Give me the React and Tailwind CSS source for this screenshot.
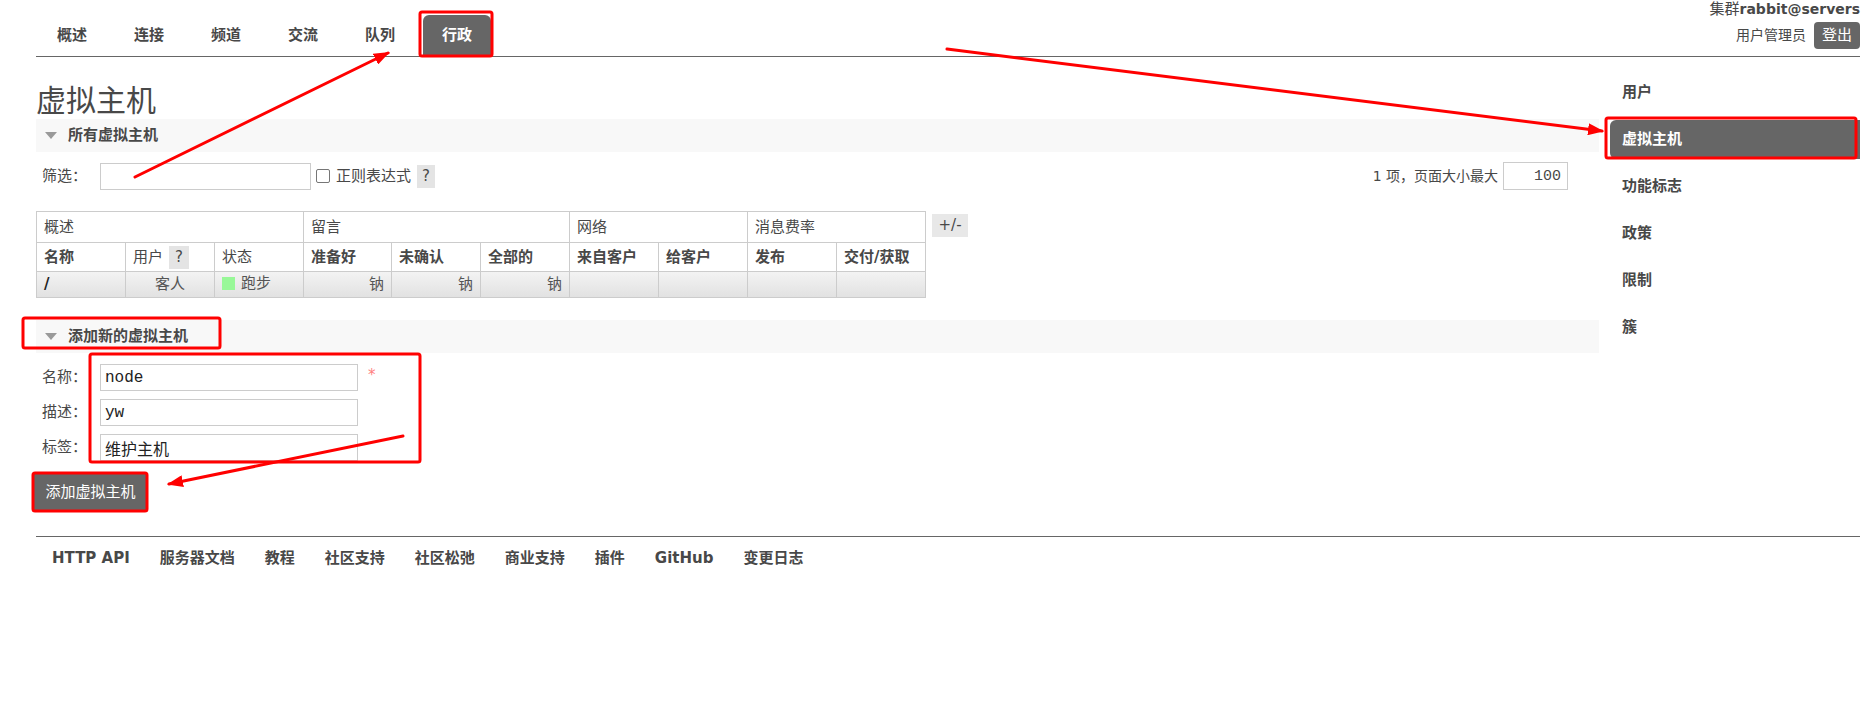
import React from "react";

const F = "font-['DejaVu_Sans','Noto_Sans_CJK_SC',sans-serif]";

function Tri() {
  return (
    <svg width="12" height="7" viewBox="0 0 12 7" className="shrink-0">
      <polygon points="0,0 12,0 6,7" fill="#9a9a9a" />
    </svg>
  );
}

function SectionHeader({ title }) {
  return (
    <div className="h-[33px] bg-[#f8f8f8] flex items-center pl-[9px] gap-[11px]">
      <Tri />
      <span className="font-bold text-[15px] text-[#484848]">{title}</span>
    </div>
  );
}

const tabs = ["概述", "连接", "频道", "交流", "队列", "行政"];
const side = ["用户", "虚拟主机", "功能标志", "政策", "限制", "簇"];
const footer = ["HTTP API", "服务器文档", "教程", "社区支持", "社区松弛", "商业支持", "插件", "GitHub", "变更日志"];

export default function App() {
  const cell = "border border-[#cccccc] px-[7px] overflow-hidden whitespace-nowrap";
  return (
    <div className={`relative w-full min-h-[724px] bg-white text-[#484848] text-[15px] pl-[36px] pr-[13px] ${F}`}>
      {/* header */}
      <div className="flex justify-between h-[57px] border-b border-[#666666]">
        <div className="flex items-end gap-[9px] pl-[2px]">
          {tabs.map((t) => (
            <div
              key={t}
              className={
                t === "行政"
                  ? "h-[41px] px-[19px] rounded-t-[6px] bg-[#666666] text-white font-bold flex items-center"
                  : "h-[41px] px-[19px] font-bold flex items-center text-[#484848]"
              }
            >
              {t}
            </div>
          ))}
        </div>
        <div className="flex flex-col items-end">
          <div className="leading-[18px] text-[15px]">
            <span>集群</span>
            <span className="font-bold text-[14px]">rabbit@servers</span>
          </div>
          <div className="mt-[4px] h-[27px] flex items-center gap-[8px]">
            <span className="text-[14px]">用户管理员</span>
            <span className="h-[27px] px-[8px] rounded-[4px] bg-[#666666] text-white flex items-center">登出</span>
          </div>
        </div>
      </div>

      {/* main */}
      <div className="flex">
        <div className="flex-1 pb-[25px]">
          <h1 className="mt-[26px] h-[36px] leading-[36px] text-[30px] font-normal text-[#484848]">虚拟主机</h1>
          <SectionHeader title="所有虚拟主机" />

          <div className="mt-[10px] flex items-center justify-between pr-[31px]">
            <div className="flex items-center">
              <span className="w-[64px] pl-[6px]">筛选：</span>
              <input className="w-[211px] h-[27px] border border-[#cccccc] outline-none" />
              <input type="checkbox" className="appearance-none ml-[5px] w-[14px] h-[14px] border border-[#767676] rounded-[2px] bg-white" />
              <span className="ml-[6px]">正则表达式</span>
              <span className="ml-[6px] h-[23px] px-[5px] bg-[#e4e4e4] flex items-center">?</span>
            </div>
            <div className="flex items-center">
              <span className="text-[14px]">1 项，页面大小最大</span>
              <input
                readOnly
                value="100"
                className="ml-[5px] w-[65px] h-[28px] border border-[#cccccc] text-right pr-[6px] font-['Liberation_Mono',monospace] text-[15px] text-[#484848] outline-none"
              />
            </div>
          </div>

          <div className="mt-[21px] flex items-start">
            <table className="table-fixed border-collapse w-[889px] text-[15px]">
              <colgroup>
                <col className="w-[89px]" />
                <col className="w-[89px]" />
                <col className="w-[89px]" />
                <col className="w-[88px]" />
                <col className="w-[89px]" />
                <col className="w-[89px]" />
                <col className="w-[89px]" />
                <col className="w-[89px]" />
                <col className="w-[89px]" />
                <col className="w-[89px]" />
              </colgroup>
              <thead>
                <tr className="h-[31px]">
                  <th colSpan={3} className={`${cell} text-left font-normal`}>概述</th>
                  <th colSpan={3} className={`${cell} text-left font-normal`}>留言</th>
                  <th colSpan={2} className={`${cell} text-left font-normal`}>网络</th>
                  <th colSpan={2} className={`${cell} text-left font-normal`}>消息费率</th>
                </tr>
                <tr className="h-[29px]">
                  <th className={`${cell} text-left font-bold`}>名称</th>
                  <th className={`${cell} text-left font-normal`}>
                    <span className="inline-flex items-center">
                      用户
                      <span className="ml-[6px] h-[23px] px-[6px] bg-[#e4e4e4] inline-flex items-center">?</span>
                    </span>
                  </th>
                  <th className={`${cell} text-left font-normal`}>状态</th>
                  <th className={`${cell} text-left font-bold`}>准备好</th>
                  <th className={`${cell} text-left font-bold`}>未确认</th>
                  <th className={`${cell} text-left font-bold`}>全部的</th>
                  <th className={`${cell} text-left font-bold`}>来自客户</th>
                  <th className={`${cell} text-left font-bold`}>给客户</th>
                  <th className={`${cell} text-left font-bold`}>发布</th>
                  <th className={`${cell} text-left font-bold`}>交付/获取</th>
                </tr>
              </thead>
              <tbody>
                <tr className="h-[26px] bg-linear-to-b from-[#f3f3f3] to-[#e1e1e1] text-[#555555]">
                  <td className={`${cell} font-bold text-[#222222]`}>/</td>
                  <td className={`${cell} text-center`}>客人</td>
                  <td className={cell}>
                    <span className="inline-flex items-center gap-[6px]">
                      <span className="w-[13px] h-[13px] bg-[#98f898] inline-block" />
                      跑步
                    </span>
                  </td>
                  <td className={`${cell} text-right`}>钠</td>
                  <td className={`${cell} text-right`}>钠</td>
                  <td className={`${cell} text-right`}>钠</td>
                  <td className={cell}></td>
                  <td className={cell}></td>
                  <td className={cell}></td>
                  <td className={cell}></td>
                </tr>
              </tbody>
            </table>
            <span className="ml-[6px] mt-[3px] h-[23px] w-[36px] bg-[#e8e8e8] flex items-center justify-center">+/-</span>
          </div>

          <div className="mt-[22px]">
            <SectionHeader title="添加新的虚拟主机" />
          </div>

          <div className="mt-[11px] flex flex-col gap-[8px]">
            <div className="flex items-center">
              <span className="w-[64px] pl-[6px]">名称：</span>
              <input readOnly value="node" className="w-[258px] h-[27px] border border-[#cccccc] pl-[4px] font-['Liberation_Mono',monospace] text-[16px] text-[#222222] outline-none" />
              <span className="ml-[10px] text-[#ff8080] text-[15px] self-start">*</span>
            </div>
            <div className="flex items-center">
              <span className="w-[64px] pl-[6px]">描述：</span>
              <input readOnly value="yw" className="w-[258px] h-[27px] border border-[#cccccc] pl-[4px] font-['Liberation_Mono',monospace] text-[16px] text-[#222222] outline-none" />
            </div>
            <div className="flex items-center">
              <span className="w-[64px] pl-[6px]">标签：</span>
              <input readOnly value="维护主机" className="w-[258px] h-[27px] border border-[#cccccc] pl-[4px] font-['Noto_Sans_CJK_SC',sans-serif] text-[16px] text-[#222222] outline-none" />
            </div>
          </div>

          <button className="mt-[13px] -ml-[2px] h-[37px] w-[113px] bg-[#666666] text-white text-[15px] flex items-center justify-center">
            添加虚拟主机
          </button>
        </div>

        {/* sidebar */}
        <div className="w-[250px] ml-[11px] pt-[16px] flex flex-col gap-[8px]">
          {side.map((s) => (
            <div
              key={s}
              className={
                s === "虚拟主机"
                  ? "h-[39px] pl-[12px] flex items-center font-bold bg-[#666666] text-white rounded-l-[6px]"
                  : "h-[39px] pl-[12px] flex items-center font-bold text-[#484848]"
              }
            >
              {s}
            </div>
          ))}
        </div>
      </div>

      {/* footer */}
      <div className="border-t border-[#666666] pt-[11px] pl-[16px] flex gap-[30px]">
        {footer.map((f) => (
          <span key={f} className="font-bold text-[15px] leading-[20px] text-[#484848]">{f}</span>
        ))}
      </div>

      {/* annotations */}
      <svg className="absolute top-0 left-0 pointer-events-none" width="1873" height="724" viewBox="0 0 1873 724">
        <defs>
          <marker id="ah" markerUnits="userSpaceOnUse" markerWidth="16" markerHeight="12" refX="14" refY="6" orient="auto">
            <path d="M0,0 L16,6 L0,12 z" fill="#ff0000" />
          </marker>
        </defs>
        <g fill="none" stroke="#ff0000" strokeWidth="3">
          <rect x="420" y="12" width="72" height="44" rx="2" />
          <rect x="23" y="318" width="197" height="30" rx="2" />
          <rect x="90" y="354" width="330" height="108" rx="2" />
          <rect x="33" y="473" width="114" height="38" rx="2" />
          <rect x="1606" y="118" width="250" height="40" rx="2" />
          <line x1="135" y1="177" x2="388" y2="53" strokeLinecap="round" markerEnd="url(#ah)" />
          <line x1="947" y1="49" x2="1602" y2="131" strokeLinecap="round" markerEnd="url(#ah)" />
          <line x1="403" y1="436" x2="169" y2="484" strokeLinecap="round" markerEnd="url(#ah)" />
        </g>
      </svg>
    </div>
  );
}
